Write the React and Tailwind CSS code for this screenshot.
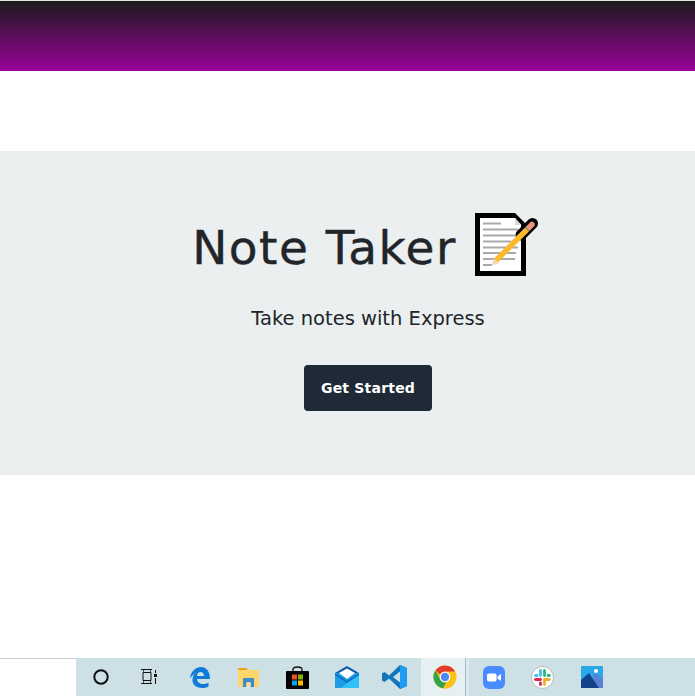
import React from "react";

// Note emoji next to the title
function NoteIcon() {
  return (
    <svg width="66" height="66" viewBox="0 0 66 66" className="shrink-0">
      <path d="M0 1H40L51 12V64H0Z" fill="#000" />
      <path d="M5 6H40L46 13V59H5Z" fill="#fff" />
      <path d="M40 6L46.500 13H40Z" fill="#d9d9d9" />
      <g stroke="#a9a9a9" strokeWidth="2">
        <path d="M8 11.500H26" />
        <path d="M8 17.500H43" />
        <path d="M8 23.500H40" />
        <path d="M8 29.500H36" />
        <path d="M8 35.500H43" />
        <path d="M8 41H41" />
        <path d="M8 47H40" />
        <path d="M8 53H17" />
      </g>
      <path d="M46 23L57.500 11.500" stroke="#000" strokeWidth="11" strokeLinecap="round" />
      <path d="M21 48.500L52 17.500" stroke="#fcb92c" strokeWidth="5.500" />
      <path d="M52 17.500L54.500 15" stroke="#9a9a9a" strokeWidth="5.500" />
      <path d="M54.500 15L57 12.500" stroke="#e8937c" strokeWidth="5.500" strokeLinecap="round" />
      <path d="M16.500 53.500L18.800 46.300L23.700 51.200Z" fill="#f3d6bd" />
    </svg>
  );
}

function Cortana() {
  return (
    <svg width="16" height="16" viewBox="0 0 16 16">
      <circle cx="8" cy="8" r="6.700" fill="none" stroke="#0b0f12" strokeWidth="2" />
    </svg>
  );
}

function TaskView() {
  return (
    <svg width="16" height="16" viewBox="0 0 16 16" fill="none" stroke="#111" strokeWidth="1">
      <path d="M0 0.500H11M0 14.500H11" />
      <path d="M2 3.500H10V11.500H2Z" strokeWidth="1" />
      <path d="M2.500 0.500V3M9.500 0.500V3M2.500 12V14.500M9.500 12V14.500" strokeWidth="0.700" />
      <path d="M14.500 1V4M14.500 9V15" />
      <rect x="13" y="5" width="3" height="3" fill="#111" stroke="none" />
    </svg>
  );
}

function Edge() {
  return (
    <svg width="20" height="21" viewBox="0 0 20 21">
      <path
        d="M0 11C1 4 6 0 11 0C16 0 20 4 20 12H7C7.500 15.500 10 17 13 17C15 17 17 16.500 18.500 15.500V19.500C16.500 20.500 14.500 21 12 21C6 21 2 17.500 2.500 12C2.800 9 4.500 6.500 7 5C5 6 3 8 0 11ZM7 9H14C14 6.500 12.500 5 10.500 5C8.500 5 7.200 6.500 7 9Z"
        fill="#0f7ad8"
        fillRule="evenodd"
      />
    </svg>
  );
}

function Explorer() {
  return (
    <svg width="21" height="19" viewBox="0 0 21 19">
      <path d="M0 1.500Q0 0 1.500 0H8L10 2H0Z" fill="#e8a317" />
      <rect x="0" y="2" width="21" height="17" rx="1" fill="#fcd669" />
      <path d="M5 11Q5 10 6 10H15Q16 10 16 11V19H12.500V14H8.500V19H5Z" fill="#3c8ad0" />
      <rect x="8.500" y="15" width="4" height="4" fill="#fbe5a0" />
    </svg>
  );
}

function Store() {
  return (
    <svg width="23" height="23" viewBox="0 0 23 23">
      <path d="M7 6V3.500Q7 1 11.500 1Q16 1 16 3.500V6" fill="none" stroke="#111" strokeWidth="1.300" />
      <rect x="0" y="5" width="23" height="18" rx="1" fill="#000" />
      <rect x="6" y="8.500" width="5" height="5" fill="#f25022" />
      <rect x="12" y="8.500" width="5" height="5" fill="#7fba00" />
      <rect x="6" y="14.500" width="5" height="5" fill="#00a4ef" />
      <rect x="12" y="14.500" width="5" height="5" fill="#ffb900" />
    </svg>
  );
}

function Mail() {
  return (
    <svg width="24" height="22" viewBox="0 0 24 22">
      <path d="M0 7L12 0L24 7Z" fill="#0a5aa8" />
      <rect x="0" y="7" width="24" height="15" fill="#1e9be6" />
      <path d="M24 7V22H6Z" fill="#30c0f5" />
      <path d="M0 7L12 15L24 7V9L12 17L0 9Z" fill="#0c6fc0" />
      <path d="M4 7L12 2.500L20 7L12 13Z" fill="#ffffff" />
    </svg>
  );
}

function VsCode() {
  return (
    <svg width="25" height="24" viewBox="0 0 25 24">
      <path d="M18 0L25 3V21L18 24L7 13.500L2.500 17L0 15.500V8.500L2.500 7L7 10.500ZM18 6.500L11 12L18 17.500Z" fill="#0f75bd" fillRule="evenodd" />
      <path d="M18 0L25 3V21L18 24Z" fill="#1f9cf0" />
    </svg>
  );
}

function Chrome() {
  return (
    <svg width="24" height="24" viewBox="0 0 24 24">
      <circle cx="12" cy="12" r="11.500" fill="#fbc116" />
      <path d="M12 .500A11.500 11.500 0 0 1 22 6.500H12A5.500 5.500 0 0 0 7 9.500L2.600 5.200A11.500 11.500 0 0 1 12 .500Z" fill="#e33b2e" />
      <path d="M2.600 5.200L7.300 14.800A5.500 5.500 0 0 0 13 17.500L10 23.300A11.500 11.500 0 0 1 2.600 5.200Z" fill="#32a64f" />
      <circle cx="12" cy="12" r="5.300" fill="#fff" />
      <circle cx="12" cy="12" r="4.200" fill="#4c8bf5" />
    </svg>
  );
}

function Zoom() {
  return (
    <svg width="22" height="23" viewBox="0 0 22 23">
      <rect width="22" height="23" rx="6" fill="#4a8cff" />
      <rect x="4" y="7.500" width="9.500" height="8" rx="1.800" fill="#fff" />
      <path d="M14.500 10.500L18 8V15L14.500 12.500Z" fill="#fff" />
    </svg>
  );
}

function Slack() {
  return (
    <svg width="23" height="23" viewBox="0 0 23 23">
      <circle cx="11.500" cy="11.500" r="11" fill="#fff" stroke="#b9b9b9" strokeWidth="1" />
      <g strokeWidth="2.800" strokeLinecap="round" fill="none">
        <path d="M9.500 4.500V9.500M4.500 9.500H6" stroke="#36c5f0" />
        <path d="M13.500 4.500V9.500M18.500 9.500H17" stroke="#2eb67d" />
        <path d="M13.500 18.500V13.500M18.500 13.500H13.500" stroke="#ecb22e" />
        <path d="M9.500 18.500V17M4.500 13.500H9.500" stroke="#e01e5a" />
      </g>
    </svg>
  );
}

function Photos() {
  return (
    <svg width="22" height="22" viewBox="0 0 22 22">
      <rect width="22" height="22" rx="1" fill="#2aa8e8" />
      <circle cx="15" cy="5" r="2" fill="#fff" />
      <path d="M12 9L15 7.500L22 13V22H14Z" fill="#5a80d8" />
      <path d="M0 14L8 7L18 22H0Z" fill="#12438a" />
    </svg>
  );
}

const leftIcons = [
  { w: "w-[50px]", icon: <Cortana /> },
  { w: "w-[46px]", icon: <TaskView /> },
  { w: "w-[56px]", icon: <Edge /> },
  { w: "w-[41px]", icon: <Explorer /> },
  { w: "w-[57px]", icon: <Store /> },
  { w: "w-[42px]", icon: <Mail /> },
  { w: "w-[53px]", icon: <VsCode /> },
];

const rightIcons = [
  { w: "w-[50px]", icon: <Zoom /> },
  { w: "w-[47px]", icon: <Slack /> },
  { w: "w-[52px]", icon: <Photos /> },
];

export default function App() {
  return (
    <div className="h-[696px] flex flex-col bg-white font-['DejaVu_Sans',sans-serif]">
      {/* page header */}
      <div className="h-[71px] bg-linear-to-b/srgb from-[#1b1b1b] to-[#990099] border-t border-[#e4e4e4]" />

      {/* jumbotron */}
      <div className="mt-20 h-[324px] bg-[#ebeff0] flex flex-col items-center pl-[41px]">
        <div className="mt-[61px] mr-[3px] flex items-start">
          <h1 className="text-[47px] leading-[67px] mt-[2px] font-normal tracking-[1.500px] [-webkit-text-stroke:0.4px_#212529] text-[#212529] whitespace-nowrap">
            Note Taker
          </h1>
          <div className="ml-[18px]">
            <NoteIcon />
          </div>
        </div>
        <p className="mt-[23px] text-[19.500px] leading-[30px] text-[#212529]">Take notes with Express</p>
        <button className="mt-[31px] w-32 h-[46px] rounded bg-[#1f2a36] text-white font-bold text-sm tracking-[0.200px]">
          Get Started
        </button>
      </div>

      <div className="flex-1" />

      {/* windows taskbar */}
      <div className="h-[38px] flex">
        <div className="w-[76px] bg-white border-t border-[#cccccc]" />
        <div className="flex-1 flex bg-[#cde0e6]">
          {leftIcons.map((item, i) => (
            <div key={i} className={`${item.w} flex items-center justify-center`}>
              {item.icon}
            </div>
          ))}
          <div className="w-[44px] bg-[#e6f0f3] flex items-center justify-center pl-[3px]">
            <Chrome />
          </div>
          <div className="w-px bg-[#a9bcc3]" />
          <div className="w-[3px] bg-[#dce9ed]" />
          {rightIcons.map((item, i) => (
            <div key={i} className={`${item.w} flex items-center justify-center`}>
              {item.icon}
            </div>
          ))}
        </div>
      </div>
    </div>
  );
}
